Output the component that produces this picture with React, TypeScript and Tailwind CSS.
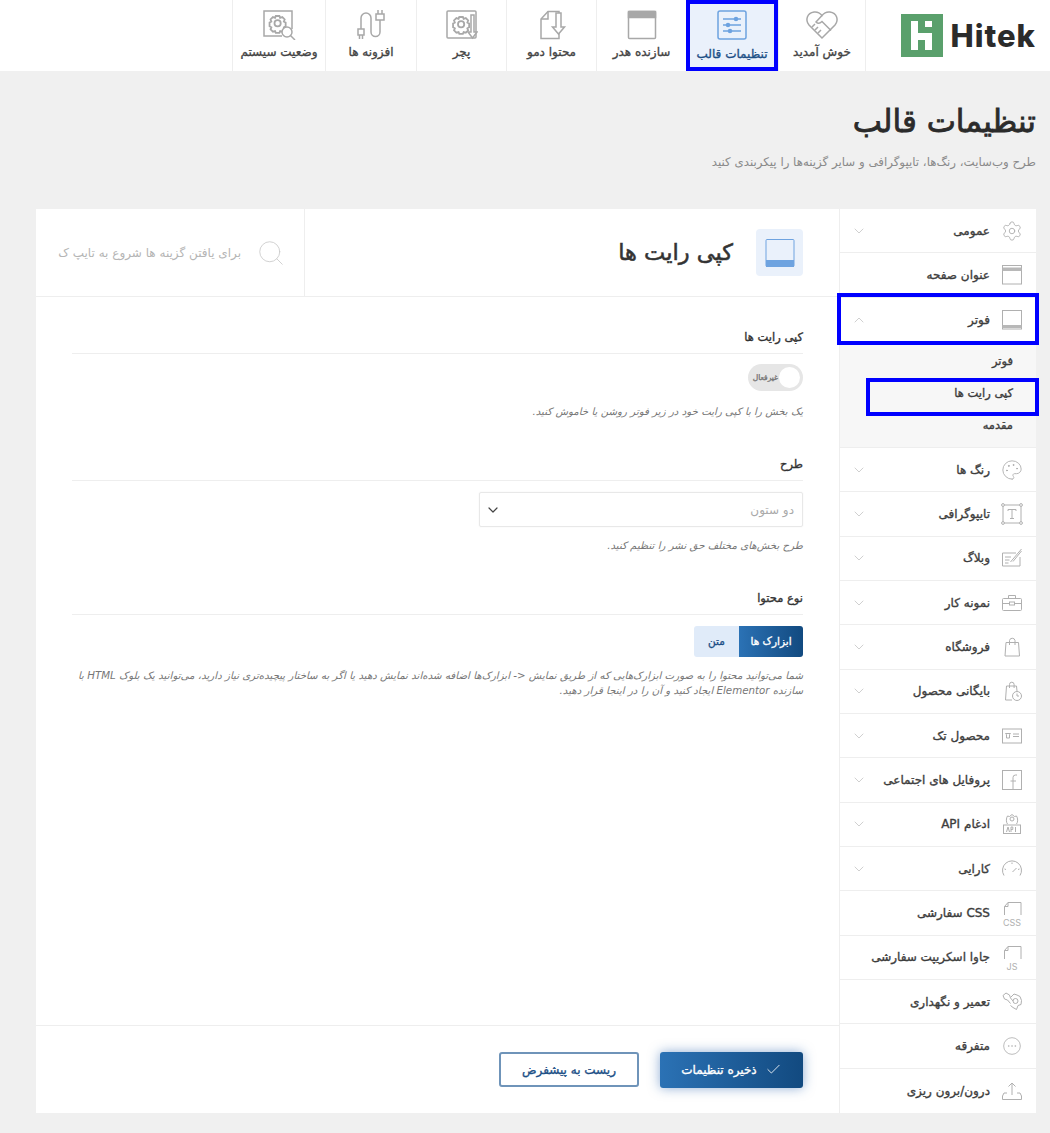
import { Check, ChevronDown, ChevronUp, Search, Settings, Palette } from 'lucide-react'
import type { ReactNode } from 'react'

// regular DejaVu with a thin stroke sits closer to the reference weight than DejaVu Bold
const semi = '[-webkit-text-stroke:0.35px]'

// line icons drawn for the sidebar / top bar, all on a 24 box
const Svg = ({ children, size = 24, stroke = '#b0b0b0', sw = 1 }: { children: ReactNode; size?: number; stroke?: string; sw?: number }) => (
  <svg width={size} height={size} viewBox="0 0 24 24" fill="none" stroke={stroke} strokeWidth={sw}>
    {children}
  </svg>
)

const HeaderIcon = () => (
  <Svg>
    <rect x="2.500" y="2.500" width="19" height="18.500" />
    <rect x="2.500" y="4.500" width="19" height="3.500" fill="#b8b8b8" stroke="none" />
  </Svg>
)
const FooterIcon = () => (
  <Svg>
    <rect x="2.500" y="2.500" width="19" height="18.500" />
    <rect x="2.500" y="17" width="19" height="3" fill="#b8b8b8" stroke="none" />
  </Svg>
)
const TypeIcon = () => (
  <Svg>
    <rect x="3" y="3" width="18" height="18" />
    <circle cx="3" cy="3" r="1.400" fill="#fff" />
    <circle cx="21" cy="3" r="1.400" fill="#fff" />
    <circle cx="3" cy="21" r="1.400" fill="#fff" />
    <circle cx="21" cy="21" r="1.400" fill="#fff" />
    <path d="M8 9V7.500h8V9M12 7.500V16.500M10 16.500h4" />
  </Svg>
)
const BlogIcon = () => (
  <Svg>
    <path d="M20 11v9H2.500V7H16" />
    <path d="M5 11h6M5 14h4.500M5 17h3.500" />
    <path d="M10.500 16 21.500 3M13 15.500l8.500-10.500" />
  </Svg>
)
const BriefcaseIcon = () => (
  <Svg>
    <rect x="2.500" y="7.500" width="19" height="12" rx="1" />
    <path d="M8.500 7.500V4.500h7v3M2.500 12.500h7M14.500 12.500h7" />
    <rect x="9.500" y="11" width="5" height="3" />
  </Svg>
)
const BagIcon = () => (
  <Svg>
    <path d="M6 7.500h12.500l1 13.500h-14.500z" />
    <path d="M9.500 10V5.500a2.800 2.800 0 0 1 5.500 0V10" />
  </Svg>
)
const ArchiveIcon = () => (
  <Svg>
    <path d="M12 21H5.500l1-14h10l.5 5" />
    <path d="M9.500 9V5.500a2.300 2.300 0 0 1 4.600 0V9" />
    <circle cx="17" cy="17" r="4.500" />
    <path d="M17 14.500V17h2" />
  </Svg>
)
const ProductIcon = () => (
  <Svg>
    <rect x="2.500" y="5" width="19" height="14" />
    <path d="M5.500 9.500h5l-1 1.200v3.300h-3v-3.300zM13 10h6M13 12.500h6" />
  </Svg>
)
const SocialIcon = () => (
  <Svg>
    <rect x="2.500" y="2.500" width="19" height="19" />
    <path d="M17 7h-1.500a2.500 2.500 0 0 0-2.500 2.500V21.500M10.500 13H16" />
  </Svg>
)
const ApiIcon = () => (
  <Svg>
    <circle cx="12" cy="7" r="2" />
    <path d="M7.500 12c-1.500-1.500-1.500-6 0-8l2 .5L12 2.500l2.500 2 2-.5c1.500 2 1.500 6.500 0 8" />
    <rect x="3.500" y="13" width="17" height="8.500" />
    <path d="M6.500 20l1.500-5 1.500 5M11 20v-5h1.800v2.500H11M15.500 15v5" />
  </Svg>
)
const GaugeIcon = () => (
  <Svg>
    <path d="M4 18.500a9.500 9.500 0 1 1 16 0" />
    <path d="M12.500 15 16.500 11M4.500 12l1.500.500M19.500 12l-1.500.500M12 5.500V7" />
  </Svg>
)
const CodeFileIcon = ({ label }: { label: string }) => (
  <div className="relative h-[24px] w-[24px]">
    <svg width="24" height="24" viewBox="0 0 24 24" fill="none" stroke="#b0b0b0">
      <path d="M4.500 14V5.500L8 1.500h13V14" />
      <path d="M4.500 5.500H8V1.500" />
    </svg>
    <span className="absolute bottom-[-4px] left-0 w-full text-center font-['Inter',sans-serif] text-[9px] leading-[12px] text-[#b0b0b0]">{label}</span>
  </div>
)
const RepairIcon = () => (
  <Svg>
    <path d="M3 5.500 6 3l3.500 2 1 3L13 11M3 5.500l1.500 3.500 3 1 3 3.500" />
    <circle cx="15.500" cy="11" r="2.500" />
    <path d="M11 7l3-3 3 1 3 1.500 1.500 4-.5 4-3 1-1.500 4-3.500-2-2.500-2" />
  </Svg>
)
const DotsIcon = () => (
  <Svg size={20}>
    <circle cx="12" cy="12" r="10" />
    <path d="M8 12h.1M12 12h.1M16 12h.1" strokeWidth="2" strokeLinecap="round" />
  </Svg>
)
const TransferIcon = () => (
  <Svg>
    <path d="M7 14H4l-1.500 3v3.500h19V17L20 14h-3" />
    <path d="M12 16V4M8.500 7.500 12 4l3.500 3.500" />
  </Svg>
)

const gear = (s: string, cx: number, cy: number) => (
  <g stroke={s}>
    <circle cx={cx} cy={cy} r="2.600" />
    <path
      d={`M${cx - 1.500} ${cy - 6}h3l.6 1.500 1.800-.6 2 2-.7 1.700 1.500.9v3l-1.500.9.700 1.700-2 2-1.800-.6-.6 1.500h-3l-.6-1.500-1.800.6-2-2 .7-1.700-1.500-.9v-3l1.500-.9-.7-1.700 2-2 1.800.6z`}
    />
  </g>
)

const nav: { label: string; icon: ReactNode; w: string; active?: boolean }[] = [
  {
    label: 'خوش آمدید',
    w: 'w-[87px]',
    icon: (
      <svg width="34" height="30" viewBox="0 0 34 30" fill="none" stroke="#a8a8a8" strokeWidth="1.500">
        <path d="M17 28 4 15C0 10 2 3 9 2c3.500-.5 6 1 8 3.500C19 3 21.500 1.500 25 2c7 1 9 8 5 13z" />
        <path d="M17 5.500 11 12c2 2 4 1.500 6-.5l9 9M13 23l3-3M10 20l3-3M7 17l3-3" />
      </svg>
    ),
  },
  {
    label: 'تنظیمات قالب',
    w: 'w-[92px]',
    active: true,
    icon: (
      <svg width="30" height="30" viewBox="0 0 30 30" fill="none" stroke="#6ea3e0" strokeWidth="1.500">
        <rect x="1" y="1" width="28" height="28" rx="2" />
        <path d="M6 9h18M6 15h18M6 21h18" />
        <circle cx="19" cy="9" r="1.500" fill="#6ea3e0" />
        <circle cx="11" cy="15" r="1.500" fill="#6ea3e0" />
        <circle cx="13" cy="21" r="1.500" fill="#6ea3e0" />
      </svg>
    ),
  },
  {
    label: 'سازنده هدر',
    w: 'w-[90px]',
    icon: (
      <svg width="30" height="30" viewBox="0 0 30 30" fill="none" stroke="#a8a8a8" strokeWidth="1.500">
        <rect x="1.500" y="1.500" width="27" height="27" rx="1" />
        <rect x="1.500" y="1.500" width="27" height="6" fill="#a8a8a8" />
      </svg>
    ),
  },
  {
    label: 'محتوا دمو',
    w: 'w-[90px]',
    icon: (
      <svg width="30" height="30" viewBox="0 0 30 30" fill="none" stroke="#a8a8a8" strokeWidth="1.500">
        <path d="M22 18v10.500H4V9l7-7.500h11v6" />
        <path d="M11 1.500V9H4" />
        <path d="M19 3v14h-3.500l6 7 6-7H24V3z" fill="#fff" />
      </svg>
    ),
  },
  {
    label: 'پچر',
    w: 'w-[90px]',
    icon: (
      <svg width="32" height="30" viewBox="0 0 32 30" fill="none" strokeWidth="1.500">
        <rect x="1" y="1" width="29" height="27" rx="1" stroke="#a8a8a8" />
        <g transform="translate(-.5 1) scale(1.200)">{gear('#a8a8a8', 13, 11)}</g>
        <path d="M25 5v17h-3l4.500 6 4.500-6h-3V5z" fill="#fff" stroke="#a8a8a8" />
      </svg>
    ),
  },
  {
    label: 'افزونه ها',
    w: 'w-[91px]',
    icon: (
      <svg width="30" height="30" viewBox="0 0 30 30" fill="none" stroke="#a8a8a8" strokeWidth="1.500">
        <path d="M5 19V8a5 5 0 0 1 10 0v14a4.500 4.500 0 0 0 9 0V10" />
        <path d="M20 4h8v6h-8zM22 4V0M26 4V0M2 19h6v6H2zM3.500 25v4M6.500 25v4" />
      </svg>
    ),
  },
  {
    label: 'وضعیت سیستم',
    w: 'w-[93px]',
    icon: (
      <svg width="33" height="30" viewBox="0 0 33 30" fill="none" strokeWidth="1.500">
        <path d="M19 26H1V1h28v18" stroke="#a8a8a8" />
        <g transform="translate(-1 0) scale(1.200)">{gear('#a8a8a8', 13, 11)}</g>
        <circle cx="24" cy="22" r="5" fill="#fff" stroke="#a8a8a8" />
        <path d="m27.500 25.500 4.500 4.500" stroke="#a8a8a8" />
      </svg>
    ),
  },
]

const lucideProps = { size: 22, strokeWidth: 1, color: '#b0b0b0' }

const groupA: { label: string; icon: ReactNode; arrow: boolean }[] = [
  { label: 'عمومی', icon: <Settings {...lucideProps} />, arrow: true },
  { label: 'عنوان صفحه', icon: <HeaderIcon />, arrow: false },
]

const groupB: { label: string; icon: ReactNode; arrow: boolean }[] = [
  { label: 'رنگ ها', icon: <Palette {...lucideProps} />, arrow: true },
  { label: 'تایپوگرافی', icon: <TypeIcon />, arrow: true },
  { label: 'وبلاگ', icon: <BlogIcon />, arrow: true },
  { label: 'نمونه کار', icon: <BriefcaseIcon />, arrow: true },
  { label: 'فروشگاه', icon: <BagIcon />, arrow: true },
  { label: 'بایگانی محصول', icon: <ArchiveIcon />, arrow: true },
  { label: 'محصول تک', icon: <ProductIcon />, arrow: true },
  { label: 'پروفایل های اجتماعی', icon: <SocialIcon />, arrow: true },
  { label: 'ادغام API', icon: <ApiIcon />, arrow: true },
  { label: 'کارایی', icon: <GaugeIcon />, arrow: true },
  { label: 'CSS سفارشی', icon: <CodeFileIcon label="CSS" />, arrow: false },
  { label: 'جاوا اسکریپت سفارشی', icon: <CodeFileIcon label="JS" />, arrow: false },
  { label: 'تعمیر و نگهداری', icon: <RepairIcon />, arrow: false },
  { label: 'متفرقه', icon: <DotsIcon />, arrow: false },
  { label: 'درون/برون ریزی', icon: <TransferIcon />, arrow: false },
]

function SideRow({ label, icon, arrow }: { label: string; icon: ReactNode; arrow: boolean }) {
  return (
    <div className="flex h-[44.33px] items-center border-b border-[#eeeeee] pr-[12px] pl-[11px] last:border-b-0">
      <span className="flex w-[24px] justify-center">{icon}</span>
      <span className={`${semi} mr-[10px] text-[12px] leading-none whitespace-nowrap text-[#3d3d3d]`}>{label}</span>
      {arrow && <ChevronDown size={16} strokeWidth={1.200} color="#c4c4c4" className="mr-auto" />}
    </div>
  )
}

function SectionTitle({ children }: { children: ReactNode }) {
  return <div className={`${semi} border-b border-[#eeeeee] pb-[8px] text-[11.500px] leading-[16px] text-[#333333]`}>{children}</div>
}

export default function App() {
  return (
    <div dir="rtl" className="min-h-[1133px] bg-[#f0f0f0] font-['DejaVu_Sans','Noto_Sans',sans-serif] text-[#333333]">
      {/* Top bar */}
      <header className="flex h-[71px] bg-white">
        <div className="flex w-[185px] items-center justify-start gap-[7px] border-l border-[#eeeeee] pr-[14px]">
          <span dir="ltr" className="font-['Inter',sans-serif] text-[31px] leading-none font-extrabold tracking-[1px] text-[#2b2b2b]">
            Hitek
          </span>
          <svg width="42" height="43" viewBox="0 0 42 43" className="shrink-0">
            <rect width="42" height="43" fill="#5aa06c" />
            <path d="M10 7h7v12h7v7h-7v10h-7zM24 19h7v17h-7zM24 7h7v6h-7z" fill="#fff" />
          </svg>
        </div>
        {nav.map((item) => (
          <div
            key={item.label}
            className={
              item.active
                ? 'flex h-[71px] w-[92px] flex-col items-center border-4 border-[#0000ff] bg-[#eaf1fb] pt-[6px]'
                : `flex h-[71px] ${item.w} flex-col items-center border-l border-[#eeeeee] pt-[10px]`
            }
          >
            <span className="flex h-[30px] items-center">{item.icon}</span>
            <span className={item.active ? `${semi} mt-[6px] text-[12px] leading-[16px] whitespace-nowrap text-[#1c4f86]` : `${semi} mt-[4px] text-[12px] leading-[16px] whitespace-nowrap text-[#444444]`}>
              {item.label}
            </span>
          </div>
        ))}
      </header>

      {/* Page heading */}
      <div className="px-[14px] pt-[27px] pb-[38px]">
        <h1 className="text-[31px] leading-[46px] font-normal text-[#2b2b2b] [-webkit-text-stroke:0.8px]">تنظیمات قالب</h1>
        <p className="mt-[9px] text-[11.800px] leading-[18px] text-[#8a8a8a]">طرح وب‌سایت، رنگ‌ها، تایپوگرافی و سایر گزینه‌ها را پیکربندی کنید</p>
      </div>

      {/* Settings card */}
      <div className="mr-[14px] ml-[36px] flex h-[904px] bg-white">
        <aside className="w-[197px] shrink-0 border-l border-[#eeeeee]">
          {groupA.map((row) => (
            <SideRow key={row.label} {...row} />
          ))}
          <div className="relative">
            <div className="flex h-[44.33px] items-center pr-[12px] pl-[11px]">
              <span className="flex w-[24px] justify-center">
                <FooterIcon />
              </span>
              <span className={`${semi} mr-[10px] text-[12px] leading-none text-[#3d3d3d]`}>فوتر</span>
              <ChevronUp size={16} strokeWidth={1.200} color="#c4c4c4" className="mr-auto" />
            </div>
            <span className="absolute -top-[5px] -right-[3px] -bottom-[3px] -left-[3px] border-4 border-[#0000ff]" />
          </div>
          <div className={`${semi} h-[106px] border-b border-[#eeeeee] bg-[#f7f7f7] pt-[4px] text-[11.500px] text-[#3d3d3d]`}>
            <div className="flex h-[32px] items-center pr-[23px]">فوتر</div>
            <div className="relative flex h-[32px] items-center pr-[23px]">
              کپی رایت ها
              <span className="absolute top-0 -right-[3px] -bottom-[6px] left-[26px] border-4 border-[#0000ff]" />
            </div>
            <div className="flex h-[32px] items-center pr-[23px]">مقدمه</div>
          </div>
          {groupB.map((row) => (
            <SideRow key={row.label} {...row} />
          ))}
        </aside>

        <main className="flex min-w-0 flex-1 flex-col">
          <div className="flex h-[88px] items-center border-b border-[#eeeeee]">
            <div className="flex h-full w-[535px] shrink-0 items-center border-l border-[#eeeeee] pr-[36px]">
              <div className="flex h-[47px] w-[47px] items-center justify-center rounded-[4px] bg-[#eaf1fb]">
                <svg width="30" height="30" viewBox="0 0 30 30" fill="none">
                  <rect x="1" y="1.500" width="28" height="27" rx="1" stroke="#6ea3e0" />
                  <rect x="1" y="22" width="28" height="7" fill="#6ea3e0" />
                </svg>
              </div>
              <h2 className="mr-[23px] text-[22.500px] leading-none font-normal text-[#333333] [-webkit-text-stroke:0.55px]">کپی رایت ها</h2>
            </div>
            <div className="flex min-w-0 flex-1 items-center pr-[18px] pl-[27px]">
              <Search size={30} strokeWidth={0.650} color="#c8c8c8" className="shrink-0" />
              <span className="mr-[15px] text-[12px] whitespace-nowrap text-[#b5b5b5]">برای یافتن گزینه ها شروع به تایپ ک</span>
            </div>
          </div>

          <div className="flex-1 px-[36px] pt-[32px]">
            <SectionTitle>کپی رایت ها</SectionTitle>
            <div className="mt-[10px] flex h-[27px] w-[55px] items-center rounded-full bg-[#e6e6e6] pr-[3px]">
              <span className="h-[21px] w-[21px] shrink-0 rounded-full bg-white" />
              <span className={`${semi} mr-[1px] text-[7.500px] whitespace-nowrap text-[#777777]`}>غیرفعال</span>
            </div>
            <p className="mt-[12px] text-[10.250px] leading-[16px] text-[#777777] italic">یک بخش را با کپی رایت خود در زیر فوتر روشن یا خاموش کنید.</p>

            <div className="mt-[37px]">
              <SectionTitle>طرح</SectionTitle>
            </div>
            <div className="mt-[11px] flex h-[35px] w-[324px] items-center justify-between rounded-[2px] border border-[#e8e8e8] pr-[8px] pl-[5px] shadow-[0_0_2px_rgba(0,0,0,0.06)]">
              <span className="text-[12px] text-[#aaaaaa]">دو ستون</span>
              <ChevronDown size={16} strokeWidth={1.800} color="#444444" />
            </div>
            <p className="mt-[10px] text-[10.250px] leading-[16px] text-[#777777] italic">طرح بخش‌های مختلف حق نشر را تنظیم کنید.</p>

            <div className="mt-[37px]">
              <SectionTitle>نوع محتوا</SectionTitle>
            </div>
            <div className={`${semi} mt-[11px] flex h-[31px] w-[109px] overflow-hidden rounded-[3px] text-[10.500px]`}>
              <span className="flex w-[64px] items-center justify-center bg-linear-to-r from-[#2b72b5] to-[#124a80] text-white">ابزارک ها</span>
              <span className="flex flex-1 items-center justify-center bg-[#e0ebf9] text-[#1c4f86]">متن</span>
            </div>
            <p className="mt-[11px] text-[10.250px] leading-[15px] text-[#777777] italic">
              شما می‌توانید محتوا را به صورت ابزارک‌هایی که از طریق نمایش &lt;- ابزارک‌ها اضافه شده‌اند نمایش دهید یا اگر به ساختار پیچیده‌تری نیاز دارید، می‌توانید یک بلوک HTML با سازنده Elementor ایجاد کنید و آن را در اینجا قرار دهید.
            </p>
          </div>

          <div className="flex h-[88px] items-center gap-[21px] border-t border-[#eeeeee] pr-[36px]">
            <button className={`${semi} flex h-[36px] w-[143px] items-center justify-center gap-[8px] rounded-[3px] bg-linear-to-r from-[#2b72b5] to-[#124a80] text-[12px] text-white shadow-[0_0_12px_rgba(30,90,170,0.5)]`} dir="ltr">
              <span dir="rtl">ذخیره تنظیمات</span>
              <Check size={17} strokeWidth={1.200} />
            </button>
            <button className={`${semi} flex h-[35px] w-[140px] items-center justify-center rounded-[3px] border-2 border-[#6f94b9] text-[12px] text-[#1c4f86]`}>ریست به پیشفرض</button>
          </div>
        </main>
      </div>
    </div>
  )
}
